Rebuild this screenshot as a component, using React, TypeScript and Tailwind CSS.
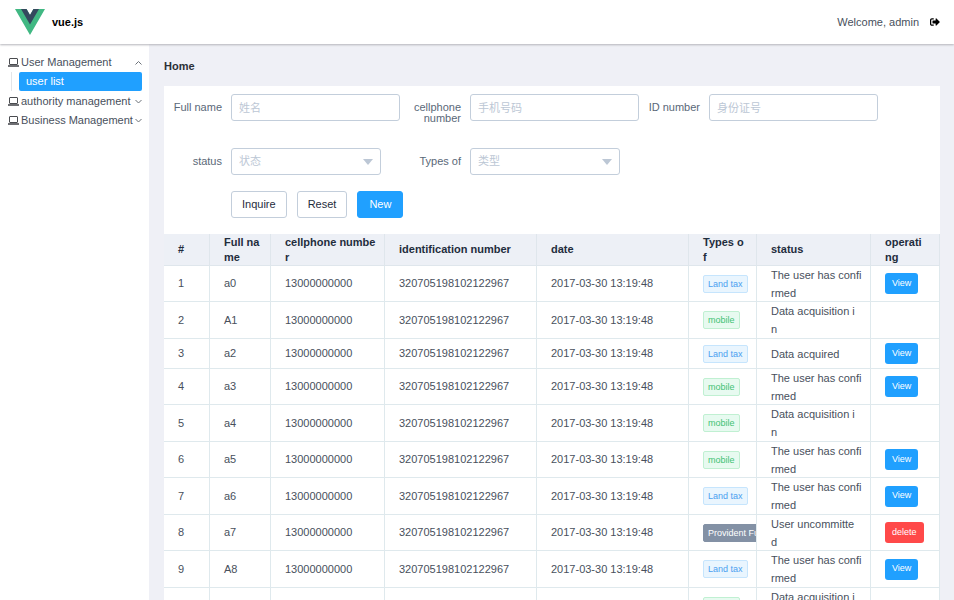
import type { ReactNode } from 'react';
import { FaSignOutAlt } from 'react-icons/fa';

type Row = {
  id: number;
  name: string;
  kind: 'Land tax' | 'mobile' | 'Provident Fund';
  status: string;
  action?: 'View' | 'delete';
  height: string;
};

const PHONE = '13000000000';
const IDENTITY = '320705198102122967';
const DATE = '2017-03-30 13:19:48';

const CONFIRMED = 'The user has confi\nrmed';
const ACQUIRING = 'Data acquisition i\nn';

const rows: Row[] = [
  { id: 1, name: 'a0', kind: 'Land tax', status: CONFIRMED, action: 'View', height: 'h-[36px]' },
  { id: 2, name: 'A1', kind: 'mobile', status: ACQUIRING, height: 'h-[37px]' },
  { id: 3, name: 'a2', kind: 'Land tax', status: 'Data acquired', action: 'View', height: 'h-[30px]' },
  { id: 4, name: 'a3', kind: 'mobile', status: CONFIRMED, action: 'View', height: 'h-[36px]' },
  { id: 5, name: 'a4', kind: 'mobile', status: ACQUIRING, height: 'h-[37px]' },
  { id: 6, name: 'a5', kind: 'mobile', status: CONFIRMED, action: 'View', height: 'h-[36px]' },
  { id: 7, name: 'a6', kind: 'Land tax', status: CONFIRMED, action: 'View', height: 'h-[37px]' },
  { id: 8, name: 'a7', kind: 'Provident Fund', status: 'User uncommitte\nd', action: 'delete', height: 'h-[36px]' },
  { id: 9, name: 'A8', kind: 'Land tax', status: CONFIRMED, action: 'View', height: 'h-[37px]' },
  { id: 10, name: 'a9', kind: 'mobile', status: ACQUIRING, height: 'h-[36px]' },
];

const tagStyle = {
  'Land tax': 'border-[#c6e5fd] bg-[#e9f5fe] text-[#4c9ff0]',
  mobile: 'border-[#c0f0d2] bg-[#e7faf0] text-[#3fc274]',
  'Provident Fund': 'border-[#8391a5] bg-[#8391a5] text-white',
};

function Chevron({ up }: { up?: boolean }) {
  return (
    <svg viewBox="0 0 8 6" className="h-[6px] w-2 shrink-0" fill="none" stroke="#6b7178" strokeWidth="1">
      <path d={up ? 'M1.500 4.500 4.500 1.500l3 3' : 'M1.500 1l3 3 3-3'} />
    </svg>
  );
}

function Laptop() {
  return (
    <svg viewBox="0 0 11 9" className="h-[9px] w-[11px] shrink-0" fill="none" stroke="#4a4c50" strokeWidth="1">
      <rect x="1.5" y="0.5" width="8" height="6" rx="0.5" />
      <path d="M0 8h11" strokeWidth="1.6" />
    </svg>
  );
}

function MenuItem({ label, open }: { label: string; open?: boolean }) {
  return (
    <button type="button" className="flex h-[19px] w-full items-center pr-[7px] pl-2 text-left whitespace-nowrap">
      <Laptop />
      <span className="min-w-0 flex-1 pl-[2px]">{label}</span>
      <Chevron up={open} />
    </button>
  );
}

function Field({ id, label, children }: { id: string; label: string; children: ReactNode }) {
  return (
    <div className="flex gap-[9px] pr-[3px]">
      <label htmlFor={id} className="w-[58px] shrink-0 pt-2 text-right leading-[11px] text-[#5a6878]">
        {label}
      </label>
      {children}
    </div>
  );
}

function TextField({ id, label, hint }: { id: string; label: string; hint: string }) {
  return (
    <Field id={id} label={label}>
      <input
        id={id}
        placeholder={hint}
        className="h-[27px] min-w-0 flex-1 rounded-[3px] border border-[#c3cedb] bg-white px-[7px] outline-none placeholder:text-[#bcc7d5]"
      />
    </Field>
  );
}

function SelectField({ id, label, hint }: { id: string; label: string; hint: string }) {
  return (
    <Field id={id} label={label}>
      <div className="relative w-[150px]">
        <select
          id={id}
          className="h-[27px] w-full appearance-none rounded-[3px] border border-[#c3cedb] bg-white px-[7px] text-[#bcc7d5] outline-none"
        >
          <option>{hint}</option>
        </select>
        <svg viewBox="0 0 10 6" className="pointer-events-none absolute top-[11px] right-2 h-[6px] w-[10px]">
          <path d="M0 0h10L5 6z" fill="#bcc7d5" />
        </svg>
      </div>
    </Field>
  );
}

const headCell = 'border-r border-b border-[#dfe6ec] pl-[14px] text-left font-bold break-all';
const cell = 'overflow-hidden border-r border-b border-[#dfe9ed] pl-[14px] whitespace-nowrap';

export default function App() {
  return (
    <div className="flex h-screen flex-col overflow-hidden bg-[#eff0f6] font-['Liberation_Sans','Noto_Sans_CJK_SC',sans-serif] text-[11px] text-[#48505c]">
      <header className="z-10 flex h-11 shrink-0 items-center justify-between bg-white pr-[14px] pl-[15px] shadow-[0_1px_2px_#b4b5bb]">
        <div className="flex items-center gap-[7px]">
          <svg viewBox="0 0 261.76 226.69" className="h-[26px] w-[30px]">
            <path d="M161.096 0l-30.225 52.351L100.647 0H0l130.872 226.688L261.749 0z" fill="#41b883" />
            <path d="M161.096 0l-30.225 52.351L100.647 0H52.346l78.526 136.010L209.398 0z" fill="#35495e" />
          </svg>
          <strong className="text-black">vue.js</strong>
        </div>
        <div className="flex items-center gap-[11px]">
          <span>Welcome, admin</span>
          <button type="button" aria-label="Log out" className="text-black">
            <FaSignOutAlt className="h-[10px] w-[10px]" />
          </button>
        </div>
      </header>

      <div className="flex min-h-0 flex-1">
        <nav className="w-[149px] shrink-0 bg-white pt-[9px]">
          <MenuItem label="User Management" open />
          <div className="mr-[7px] mb-px ml-[11px] border-l border-[#e3e5e8] pl-[7px]">
            <a href="#users" className="block h-[19px] rounded-[2px] bg-[#20a0ff] pl-[7px] leading-[19px] text-white">
              user list
            </a>
          </div>
          <MenuItem label="authority management" />
          <MenuItem label="Business Management" />
        </nav>

        <main className="min-w-0 flex-1 pr-[14px] pl-[15px]">
          <h1 className="flex h-[42px] items-center pt-0.5 font-bold text-[#2b2f36]">Home</h1>

          <form className="h-[148px] bg-white pt-2" onSubmit={(e) => e.preventDefault()}>
            <div className="grid grid-cols-3 gap-y-6 pr-[59px]">
              <TextField id="name" label="Full name" hint="姓名" />
              <TextField id="phone" label="cellphone number" hint="手机号码" />
              <TextField id="identity" label="ID number" hint="身份证号" />
              <SelectField id="status" label="status" hint="状态" />
              <SelectField id="type" label="Types of" hint="类型" />
            </div>
            <div className="mt-4 flex gap-[10px] pl-[67px]">
              <button type="submit" className="h-[27px] rounded-[3px] border border-[#c3cedb] px-[10px] text-[#1f2d3d]">
                Inquire
              </button>
              <button type="reset" className="h-[27px] rounded-[3px] border border-[#c3cedb] px-[10px] text-[#1f2d3d]">
                Reset
              </button>
              <button type="button" className="h-[27px] rounded-[3px] border border-[#20a0ff] bg-[#20a0ff] px-[11px] text-white">
                New
              </button>
            </div>
          </form>

          <table className="w-full table-fixed border-separate border-spacing-0 bg-white">
            <colgroup>
              <col className="w-[46px]" />
              <col className="w-[61px]" />
              <col className="w-[114px]" />
              <col />
              <col />
              <col className="w-[68px]" />
              <col className="w-[114px]" />
              <col className="w-[69px]" />
            </colgroup>
            <thead className="bg-[#edf0f6] leading-[15px] text-[#1f2d3d]">
              <tr className="h-8">
                <th className={headCell}>#</th>
                <th className={`${headCell} pr-2`}>Full name</th>
                <th className={`${headCell} pr-2`}>cellphone number</th>
                <th className={headCell}>identification number</th>
                <th className={headCell}>date</th>
                <th className={`${headCell} pr-3`}>Types of</th>
                <th className={headCell}>status</th>
                <th className={`${headCell} pr-3`}>operating</th>
              </tr>
            </thead>
            <tbody>
              {rows.map((r) => (
                <tr key={r.id} className={r.height}>
                  <td className={cell}>{r.id}</td>
                  <td className={cell}>{r.name}</td>
                  <td className={cell}>{PHONE}</td>
                  <td className={cell}>{IDENTITY}</td>
                  <td className={cell}>{DATE}</td>
                  <td className={cell}>
                    <span className={`block h-[18px] w-max rounded-[2px] border px-1 text-[9px] leading-4 ${tagStyle[r.kind]}`}>
                      {r.kind}
                    </span>
                  </td>
                  <td className="border-r border-b border-[#dfe9ed] pl-[14px] leading-[18px] whitespace-pre">
                    <div className="flex max-h-[35px] flex-col justify-center">{r.status}</div>
                  </td>
                  <td className={cell}>
                    {r.action && (
                      <button
                        type="button"
                        className={`block h-[21px] rounded-[3px] px-[7px] text-[9px] text-white ${r.action === 'View' ? 'bg-[#20a0ff]' : 'bg-[#ff4949]'}`}
                      >
                        {r.action}
                      </button>
                    )}
                  </td>
                </tr>
              ))}
            </tbody>
          </table>
        </main>
      </div>
    </div>
  );
}
